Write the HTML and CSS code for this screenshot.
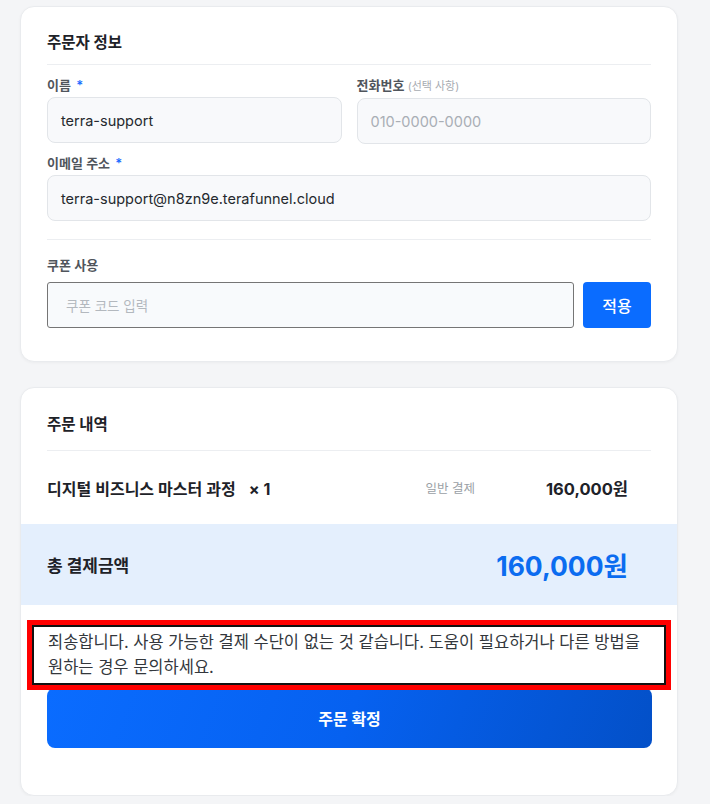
FILE: index.html
```html
<!DOCTYPE html>
<html lang="ko">
<head>
<meta charset="utf-8">
<link rel="stylesheet" href="styles.css">
</head>
<body>
<main class="page">
  <section class="card info">
    <h2 class="card-title">주문자 정보</h2>
    <div class="row two">
      <div class="field">
        <label class="label">이름 <span class="req">*</span></label>
        <div class="input">terra-support</div>
      </div>
      <div class="field">
        <label class="label">전화번호 <span class="opt">(선택 사항)</span></label>
        <div class="input placeholder">010-0000-0000</div>
      </div>
    </div>
    <div class="field">
      <label class="label">이메일 주소 <span class="req">*</span></label>
      <div class="input">terra-support@n8zn9e.terafunnel.cloud</div>
    </div>
    <div class="divider coupon-divider"></div>
    <div class="field">
      <label class="label">쿠폰 사용</label>
      <div class="coupon-row">
        <div class="coupon-input">쿠폰 코드 입력</div>
        <button class="apply">적용</button>
      </div>
    </div>
  </section>

  <section class="card order">
    <h2 class="card-title">주문 내역</h2>
    <div class="item-row">
      <span class="item-name">디지털 비즈니스 마스터 과정 <span class="qty">× 1</span></span>
      <span class="item-type">일반 결제</span>
      <span class="item-price">160,000원</span>
    </div>
    <div class="total">
      <span class="total-label">총 결제금액</span>
      <span class="total-amount">160,000원</span>
    </div>
    <button class="confirm">주문 확정</button>
    <div class="notice">죄송합니다. 사용 가능한 결제 수단이 없는 것 같습니다. 도움이 필요하거나 다른 방법을 원하는 경우 문의하세요.</div>
  </section>
</main>
</body>
</html>
```

FILE: styles.css
```css
* { box-sizing: border-box; }

body {
  margin: 0;
  background: #f4f5f7;
  font-family: "Inter", "Noto Sans CJK KR", sans-serif;
  color: #1f2329;
}

.page {
  width: 658px;
  margin-left: 20px;
  padding-top: 6px;
  display: flex;
  flex-direction: column;
  gap: 25px;
}

.card {
  background: #fff;
  border: 1px solid #e9ebee;
  border-radius: 14px;
  box-shadow: 0 1px 3px rgba(0, 0, 0, 0.04);
}

.info {
  padding: 25px 26px 33px;
}

.card-title {
  margin: 0;
  font-size: 15.5px;
  font-weight: 700;
  line-height: 22px;
  color: #1e2228;
  padding-bottom: 10px;
  border-bottom: 1px solid #eceef1;
}

.row.two {
  display: grid;
  grid-template-columns: 1fr 1fr;
  gap: 15px;
  margin-top: 11px;
}

.field { display: flex; flex-direction: column; }

.info > .field { margin-top: 10px; }

.label {
  font-size: 13px;
  line-height: 18px;
  font-weight: 600;
  color: #50555c;
  margin-bottom: 3px;
}

.req { color: #1a6cff; margin-left: 2px; }

.opt {
  font-size: 11px;
  font-weight: 400;
  color: #a7abb1;
}

.input {
  height: 46px;
  border: 1px solid #e2e5e9;
  border-radius: 8px;
  background: #f8f9fb;
  padding: 0 13px;
  display: flex;
  align-items: center;
  font-size: 14.5px;
  color: #25292e;
}

.input.placeholder { color: #a9aeb5; }

.divider { height: 1px; background: #eceef1; }

.info > .coupon-divider { margin-top: 18px; }

.info > .divider + .field { margin-top: 16px; }

.coupon-row {
  display: flex;
  gap: 9px;
  margin-top: 5px;
}

.coupon-input {
  flex: 1;
  height: 46px;
  border: 1.5px solid #757575;
  border-radius: 3px;
  background: #f8fafc;
  padding: 0 18px;
  display: flex;
  align-items: center;
  font-size: 13.5px;
  color: #b3b8be;
}

.apply {
  width: 68px;
  height: 46px;
  border: none;
  border-radius: 4px;
  background: #0a6cff;
  color: #fff;
  font-family: inherit;
  font-size: 16px;
  font-weight: 500;
}

.order {
  position: relative;
  padding: 26px 0 47px;
}

.order .card-title {
  margin: 0 26px;
  padding-bottom: 14px;
}

.item-row {
  height: 73px;
  padding: 0 49px 0 26px;
  display: grid;
  grid-template-columns: 1fr auto 153px;
  align-items: center;
}

.item-name {
  font-size: 16px;
  font-weight: 600;
  color: #1e2228;
}

.qty { font-weight: 700; margin-left: 9px; }

.item-type {
  font-size: 12.5px;
  color: #9a9fa6;
}

.item-price {
  text-align: right;
  font-size: 16.5px;
  font-weight: 700;
  color: #1e2228;
}

.total {
  height: 81px;
  background: #e4effd;
  padding: 0 49px 0 26px;
  display: flex;
  align-items: center;
  justify-content: space-between;
}

.total-label {
  font-size: 17px;
  font-weight: 700;
  color: #1e2228;
}

.total-amount {
  font-size: 26.5px;
  font-weight: 700;
  color: #0b6cf0;
}

.confirm {
  display: block;
  width: 605px;
  height: 60px;
  margin: 83px 0 0 26px;
  border: none;
  border-radius: 8px;
  background: linear-gradient(110deg, #0a6cff 0%, #0661f0 50%, #0350c8 100%);
  color: #fff;
  font-family: inherit;
  font-size: 16px;
  font-weight: 700;
}

.notice {
  position: absolute;
  left: 6px;
  top: 232px;
  width: 644px;
  height: 70px;
  background: #fff;
  border: 5px solid #ff0000;
  box-shadow: inset 0 0 0 2px #111;
  padding: 5px 16px 0 16px;
  font-size: 16.5px;
  line-height: 25px;
  color: #33373c;
}
```
